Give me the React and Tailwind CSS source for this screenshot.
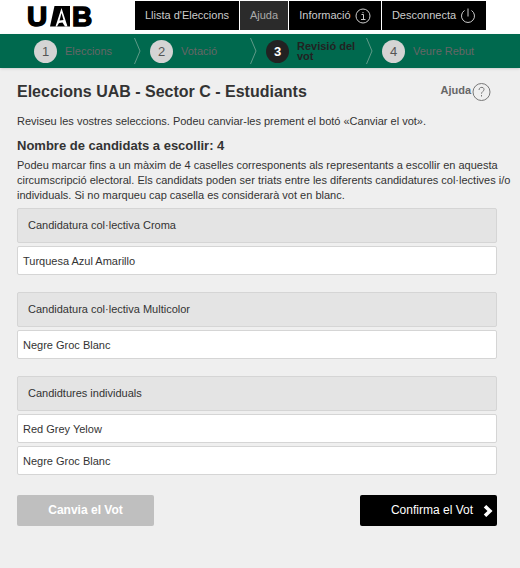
import { Fragment } from "react";

const steps = [
  { id: 1, label: "Eleccions" },
  { id: 2, label: "Votació" },
  { id: 3, label: "Revisió del vot" },
  { id: 4, label: "Veure Rebut" },
];

const groups = [
  { name: "Candidatura col·lectiva Croma", candidates: ["Turquesa Azul Amarillo"] },
  { name: "Candidatura col·lectiva Multicolor", candidates: ["Negre Groc Blanc"] },
  { name: "Candidtures individuals", candidates: ["Red Grey Yelow", "Negre Groc Blanc"] },
];

function Logo() {
  return (
    <svg className="h-[34px] w-[76px]" viewBox="0 0 76 34" role="img" aria-label="UAB">
      <g fontFamily="Liberation Sans" fontWeight="700" fontSize="28" stroke="#000" strokeWidth="1.5">
        <text x="7" y="26">U</text>
        <text x="52" y="26">B</text>
      </g>
      <path d="M34.500 6h15.500v20.500H30z" fill="#000" />
      <path d="M41.500 8l6 18.500h-2.500l-2.500-4-3.500.5-2 3.500h-1.500z" fill="#fff" />
      <path d="M41.500 13l2 7-4 .5z" fill="#000" />
    </svg>
  );
}

function InfoIcon() {
  return (
    <svg className="h-4 w-4" viewBox="0 0 16 16" fill="none" stroke="#ccc" aria-hidden="true">
      <circle cx="8" cy="8" r="7" />
      <path d="M6.500 6.500h2v5M6 11.500h4.500M8 4v1.200" />
    </svg>
  );
}

function PowerIcon() {
  return (
    <svg className="h-4 w-4" viewBox="0 0 16 16" fill="none" stroke="#ccc" aria-hidden="true">
      <path d="M4.500 2.500A6.500 6.500 0 1 0 11.500 2.500M8 .5v8" />
    </svg>
  );
}

function StepArrow() {
  return (
    <svg className="h-7 w-[7px] shrink-0" viewBox="0 0 7 28" fill="none" stroke="#5f9a89" aria-hidden="true">
      <path d="M.5 1l5.500 13L.5 27" />
    </svg>
  );
}

export default function App() {
  return (
    <div className="min-h-screen bg-[#efefef] font-['Liberation_Sans',Arial,sans-serif] text-[11px] leading-[15px] text-[#333]">
      <header className="flex h-[34px] items-start justify-between bg-white pl-5 pr-[34px]">
        <a href="#">
          <Logo />
        </a>
        <nav className="mt-px flex gap-px text-[#ccc]">
          <a href="#" className="flex h-[29px] w-[104px] items-center justify-center bg-black whitespace-nowrap">
            Llista d'Eleccions
          </a>
          <a href="#" className="flex h-[29px] w-12 items-center justify-center bg-[#2b2b2b] text-[#aaa]">
            Ajuda
          </a>
          <a href="#" className="flex h-[29px] w-[92px] items-center justify-center gap-1 bg-black">
            Informació <InfoIcon />
          </a>
          <a href="#" className="flex h-[29px] w-[104px] items-center justify-center gap-1 bg-black">
            Desconnecta <PowerIcon />
          </a>
        </nav>
      </header>

      <ol className="flex h-[34px] items-center bg-[#00694e] pl-[34px] shadow-sm">
        {steps.map((s, i) => (
          <Fragment key={s.id}>
            <li className="flex w-[100px] items-center gap-2">
              <span
                className={
                  s.id === 3
                    ? "flex h-[23px] w-[23px] shrink-0 items-center justify-center rounded-full bg-[#222] text-[13px] font-bold text-white"
                    : "flex h-[23px] w-[23px] shrink-0 items-center justify-center rounded-full bg-[#d4d4d4] text-[13px] text-[#555]"
                }
              >
                {s.id}
              </span>
              <span
                className={
                  s.id === 3
                    ? "w-[60px] leading-[10px] font-bold text-[#222]"
                    : "whitespace-nowrap text-[#666]"
                }
              >
                {s.label}
              </span>
            </li>
            {i < steps.length - 1 && (
              <li className="mr-[9px]">
                <StepArrow />
              </li>
            )}
          </Fragment>
        ))}
      </ol>

      <main className="pt-[13px] pr-[23px] pl-[17px]">
        <div className="flex items-start justify-between">
          <h1 className="text-[16px] leading-[22px] font-bold">Eleccions UAB - Sector C - Estudiants</h1>
          <a href="#" className="mr-1.5 flex font-bold text-[#666]">
            <span className="mt-0.5">Ajuda</span>
            <svg className="mt-px h-5 w-5" viewBox="0 0 20 20" fill="none" stroke="#777" aria-hidden="true">
              <circle cx="10.500" cy="10" r="8.500" />
              <path d="M8 8c0-3.500 5-3.500 5-.5 0 2-2.500 2-2.500 4.200M10.500 13v1.500" />
            </svg>
          </a>
        </div>

        <p className="mt-[11px]">
          Reviseu les vostres seleccions. Podeu canviar-les prement el botó «Canviar el vot».
        </p>

        <h2 className="mt-2 text-[13px] leading-[18px] font-bold">Nombre de candidats a escollir: 4</h2>
        <p className="-mr-4 mt-[3px] mb-[5px]">
          Podeu marcar fins a un màxim de 4 caselles corresponents als representants a escollir en aquesta
          circumscripció electoral. Els candidats poden ser triats entre les diferents candidatures col·lectives i/o
          individuals. Si no marqueu cap casella es considerarà vot en blanc.
        </p>

        <div className="flex flex-col gap-[17px]">
          {groups.map((g) => (
            <section key={g.name} className="flex flex-col gap-[3px]">
              <h3 className="rounded-xs border border-[#d5d5d5] bg-[#e4e4e4] px-[10px] py-[9px]">{g.name}</h3>
              <ul className="flex flex-col gap-[3px]">
                {g.candidates.map((c) => (
                  <li key={c} className="rounded-xs border border-[#d5d5d5] bg-white px-[5px] pt-[7px] pb-[5px]">
                    {c}
                  </li>
                ))}
              </ul>
            </section>
          ))}
        </div>

        <div className="mt-5 flex justify-between text-[12px] text-white">
          <button className="h-[31px] w-[137px] rounded-xs bg-[#bfbfbf] font-bold">Canvia el Vot</button>
          <button className="flex h-[31px] w-[137px] items-center justify-end gap-2.5 rounded-xs bg-black pr-1">
            Confirma el Vot
            <svg className="h-3 w-[10px]" viewBox="0 0 10 12" fill="none" stroke="#fff" strokeWidth="3.500" aria-hidden="true">
              <path d="M2 1.200L7 6L2 10.800" />
            </svg>
          </button>
        </div>
      </main>
    </div>
  );
}
